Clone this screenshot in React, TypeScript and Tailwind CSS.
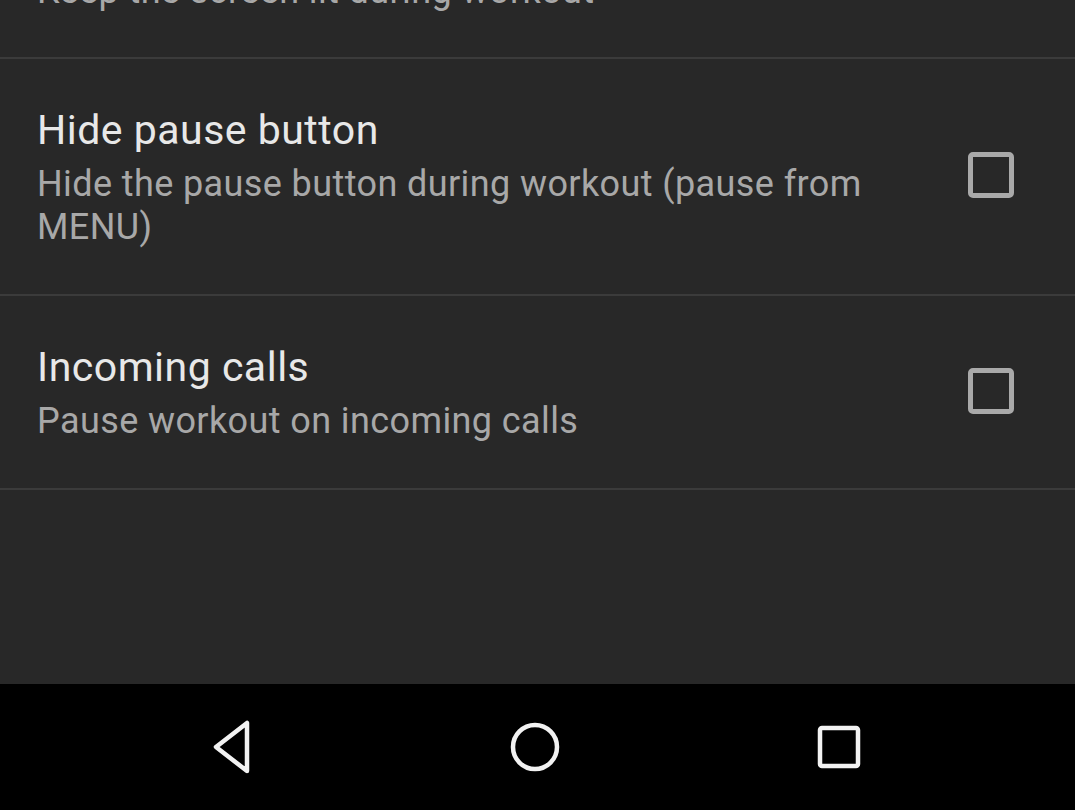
import React from "react";

function Checkbox() {
  return (
    <div className="w-[46px] h-[46px] border-[5px] border-[#a9a9a9] rounded-[5px] shrink-0 mb-[5px]" />
  );
}

function Row({ title, subtitle }: { title: string; subtitle: string }) {
  return (
    <div className="flex items-center pl-[37px] pt-[47px] pb-[45px] border-b-2 border-[#3b3b3b]">
      <div className="w-[880px] flex flex-col gap-[8px]">
        <div className="text-[41px] leading-[49px] tracking-[0.5px] text-[#e8e8e8]">{title}</div>
        <div className="text-[36px] leading-[43px] tracking-[0.4px] text-[#a8a8a8]">{subtitle}</div>
      </div>
      <div className="flex-1 flex justify-end pr-[61px]">
        <Checkbox />
      </div>
    </div>
  );
}

export default function App() {
  return (
    <div
      className="w-[1075px] h-[810px] bg-[#282828] flex flex-col overflow-hidden"
      style={{ fontFamily: "Roboto, 'Noto Sans', sans-serif" }}
    >
      <div className="h-[59px] border-b-2 border-[#3b3b3b] pl-[37px] overflow-hidden shrink-0">
        <div className="text-[36px] leading-[43px] tracking-[0.4px] text-[#a8a8a8] mt-[-30px]">
          Keep the screen lit during workout
        </div>
      </div>
      <Row
        title="Hide pause button"
        subtitle="Hide the pause button during workout (pause from MENU)"
      />
      <Row title="Incoming calls" subtitle="Pause workout on incoming calls" />
      <div className="flex-1" />
      <div className="h-[126px] bg-black flex items-center pl-[79px] shrink-0">
        <div className="w-[304px] flex justify-center">
          <svg width="50" height="56" viewBox="0 0 50 56">
            <path
              d="M41 4 L41 52 L10 28 Z"
              fill="none"
              stroke="#f2f2f2"
              strokeWidth="4.5"
              strokeLinejoin="round"
            />
          </svg>
        </div>
        <div className="w-[304px] flex justify-center">
          <svg width="52" height="52" viewBox="0 0 52 52">
            <circle cx="26" cy="26" r="22" fill="none" stroke="#f2f2f2" strokeWidth="4.5" />
          </svg>
        </div>
        <div className="w-[304px] flex justify-center">
          <svg width="48" height="48" viewBox="0 0 48 48">
            <rect x="5" y="5" width="38" height="38" rx="2" fill="none" stroke="#f2f2f2" strokeWidth="4.5" />
          </svg>
        </div>
      </div>
    </div>
  );
}
